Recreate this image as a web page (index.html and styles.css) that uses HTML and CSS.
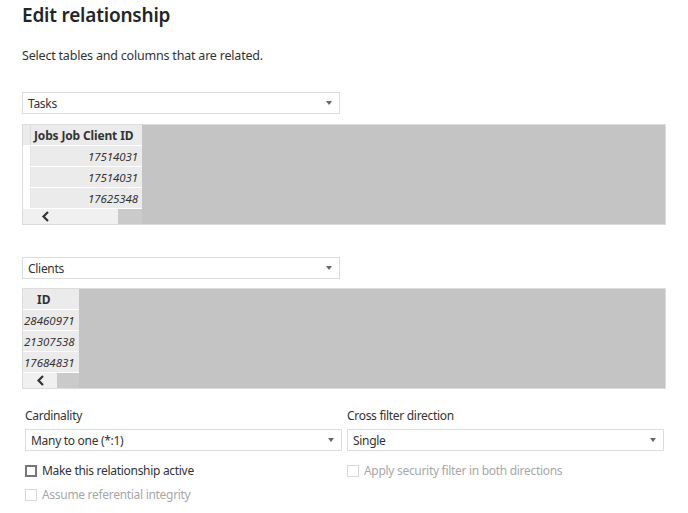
FILE: index.html
```html
<!DOCTYPE html>
<html>
<head>
<meta charset="utf-8">
<link rel="stylesheet" href="styles.css">
</head>
<body>
<div class="dialog">
  <h1 class="title">Edit relationship</h1>
  <p class="subtitle">Select tables and columns that are related.</p>

  <div class="select wide"><span>Tasks</span><i class="caret"></i></div>
  <div class="grid grid-a">
    <div class="cols">
      <div class="row head"><div class="ind ind-head"></div><div class="cell hcell w1">Jobs Job Client ID</div></div>
      <div class="row"><div class="ind"></div><div class="cell dcell right w1">17514031</div></div>
      <div class="row"><div class="ind"></div><div class="cell dcell right w1">17514031</div></div>
      <div class="row"><div class="ind"></div><div class="cell dcell right w1">17625348</div></div>
      <div class="scroll"><div class="track t1"><svg class="chev" width="9" height="11" viewBox="0 0 9 11"><path d="M7 1 L2.5 5.5 L7 10" fill="none" stroke="#333" stroke-width="2.2"/></svg></div><div class="thumb"></div></div>
    </div>
    <div class="fill"></div>
  </div>

  <div class="select wide second"><span>Clients</span><i class="caret"></i></div>
  <div class="grid grid-b">
    <div class="cols">
      <div class="row head"><div class="cell hcell w2">ID</div></div>
      <div class="row"><div class="cell dcell w2">28460971</div></div>
      <div class="row"><div class="cell dcell w2">21307538</div></div>
      <div class="row"><div class="cell dcell w2">17684831</div></div>
      <div class="scroll"><div class="track t2"><svg class="chev" width="9" height="11" viewBox="0 0 9 11"><path d="M7 1 L2.5 5.5 L7 10" fill="none" stroke="#333" stroke-width="2.2"/></svg></div><div class="thumb"></div></div>
    </div>
    <div class="fill"></div>
  </div>

  <div class="options">
    <div class="opt-col">
      <div class="label">Cardinality</div>
      <div class="select"><span>Many to one (*:1)</span><i class="caret"></i></div>
      <label class="check"><span class="box"></span>Make this relationship active</label>
      <label class="check disabled"><span class="box"></span>Assume referential integrity</label>
    </div>
    <div class="opt-col">
      <div class="label">Cross filter direction</div>
      <div class="select"><span>Single</span><i class="caret"></i></div>
      <label class="check disabled"><span class="box"></span>Apply security filter in both directions</label>
    </div>
  </div>
</div>
</body>
</html>
```
FILE: styles.css
```css
* { box-sizing: border-box; }
html, body { margin: 0; padding: 0; background: #fff; }
body {
  font-family: "Noto Sans", "Open Sans", sans-serif;
  color: #333;
  font-size: 12px;
  letter-spacing: -0.3px;
}
.dialog { padding: 0 22px 0 22px; width: 688px; }
.title {
  margin: 0;
  padding-top: 2px;
  font-size: 19px;
  font-weight: 600;
  line-height: 26px;
  color: #252525;
  letter-spacing: -0.2px;
}
.subtitle {
  margin: 19px 0 0 0;
  font-size: 12.5px;
  line-height: 18px;
  color: #333;
  letter-spacing: -0.2px;
}
.select {
  height: 22px;
  border: 1px solid #dcdcdc;
  display: flex;
  align-items: center;
  justify-content: space-between;
  padding: 0 6px 0 5px;
  font-size: 12px;
  color: #333;
  background: #fff;
}
.select.wide { width: 318px; margin-top: 27px; }
.select.second { margin-top: 32px; }
.caret {
  width: 0; height: 0;
  border-left: 3.5px solid transparent;
  border-right: 3.5px solid transparent;
  border-top: 4px solid #666;
  margin-right: 1px;
}
.grid {
  display: flex;
  width: 644px;
  border: 1px solid #dcdcdc;
  margin-top: 10px;
}
.grid-b { margin-top: 9px; }
.cols { display: flex; flex-direction: column; }
.row { display: flex; height: 21px; border-bottom: 1px solid #fff; }
.ind { width: 8px; background: #fff; border-right: 1px solid #e4e4e4; }
.ind-head { background: #ebebeb; border-right: 1px solid #dcdcdc; }
.cell {
  background: #ebebeb;
  display: flex;
  align-items: center;
  font-size: 11.5px;
  color: #333;
  letter-spacing: -0.1px;
}
.hcell { font-weight: 700; padding-left: 3px; font-size: 12px; letter-spacing: -0.15px; }
.dcell { font-style: italic; }
.right { justify-content: flex-end; padding-right: 4px; }
.w1 { width: 111px; }
.w2 { width: 56px; padding-left: 1px; letter-spacing: 0; }
.w2.hcell { padding-left: 14px; }
.scroll { display: flex; height: 15px; }
.track {
  background: #f0f0f0;
  display: flex;
  align-items: center;
  justify-content: center;
}
.t1 { width: 95px; padding-right: 50px; }
.t2 { width: 34px; }
.chev { display: block; }
.thumb { flex: 1; background: #cacaca; }
.fill { flex: 1; background: #c4c4c4; }
.options {
  display: flex;
  gap: 5px;
  margin-top: 19px;
  padding-left: 3px;
}
.opt-col { width: 317px; display: flex; flex-direction: column; }
.label { font-size: 12px; line-height: 16px; color: #333; margin-bottom: 5px; }
.check {
  display: flex;
  align-items: center;
  margin-top: 12px;
  font-size: 12px;
  line-height: 16px;
  color: #333;
  height: 16px;
}
.check + .check { margin-top: 8px; }
.box {
  width: 12px; height: 12px;
  border: 2px solid #777;
  margin-right: 5px;
  background: #fff;
}
.check.disabled { color: #a8a8a8; }
.check.disabled .box { border: 1px solid #d8d8d8; }
```
